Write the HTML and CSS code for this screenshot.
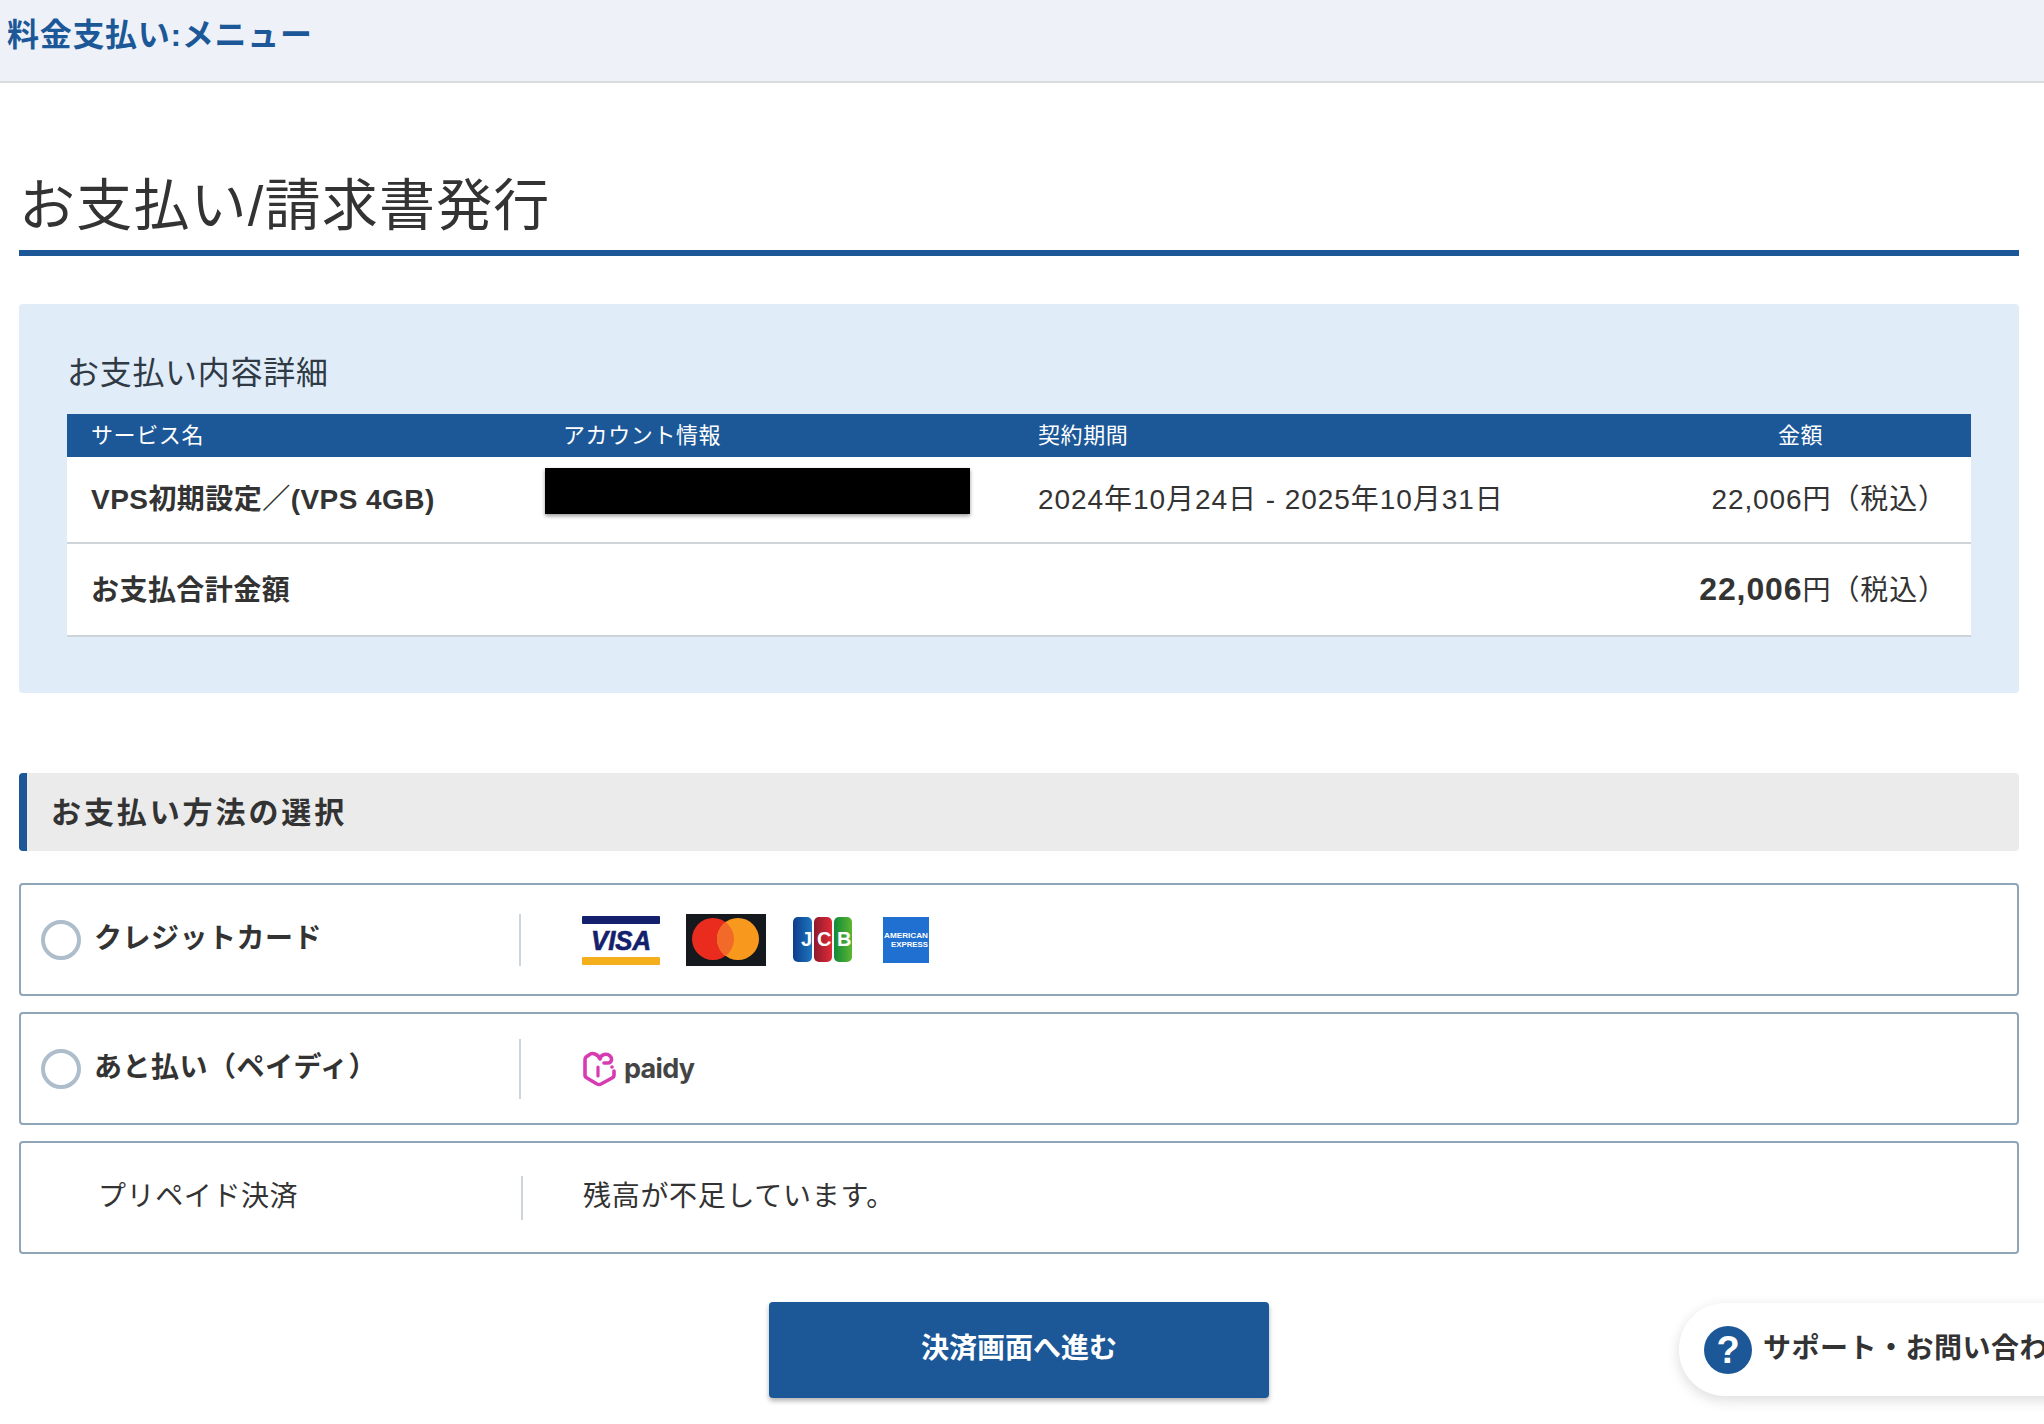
FILE: index.html
```html
<!DOCTYPE html>
<html lang="ja">
<head>
<meta charset="utf-8">
<title>お支払い/請求書発行</title>
<link rel="stylesheet" href="styles.css">
</head>
<body>
<header class="topbar"><span class="topbar-title">料金支払い:メニュー</span></header>
<main class="content">
  <h1 class="page-title">お支払い/請求書発行</h1>
  <section class="detail-panel">
    <h2 class="panel-title">お支払い内容詳細</h2>
    <table class="detail-table">
      <colgroup><col class="col-service"><col class="col-account"><col class="col-term"><col class="col-amount"></colgroup>
      <thead>
        <tr><th>サービス名</th><th>アカウント情報</th><th>契約期間</th><th class="th-amount">金額</th></tr>
      </thead>
      <tbody>
        <tr>
          <td class="strong">VPS初期設定／(VPS 4GB)</td>
          <td class="account-cell"><div class="redaction"></div></td>
          <td class="term">2024年10月24日 - 2025年10月31日</td>
          <td class="amount">22,006円（税込）</td>
        </tr>
        <tr>
          <td class="strong">お支払合計金額</td>
          <td></td>
          <td></td>
          <td class="amount"><b class="total">22,006</b>円（税込）</td>
        </tr>
      </tbody>
    </table>
  </section>

  <h2 class="section-title">お支払い方法の選択</h2>

  <div class="option">
    <span class="radio"></span>
    <span class="option-label">クレジットカード</span>
    <span class="divider"></span>
    <div class="logos">
      <svg class="logo-visa" viewBox="0 0 78 50" aria-label="VISA">
        <rect x="0" y="1" width="78" height="8" rx="1" fill="#141f6d"/>
        <rect x="0" y="42" width="78" height="8" rx="1" fill="#f5ae1c"/>
        <text x="9" y="35" class="visa-text" textLength="60" lengthAdjust="spacingAndGlyphs">VISA</text>
      </svg>
      <svg class="logo-mc" viewBox="0 0 80 52" aria-label="Mastercard">
        <rect width="80" height="52" fill="#15181c"/>
        <circle cx="27" cy="25" r="21" fill="#ea2c1f"/>
        <circle cx="52" cy="25" r="21" fill="#f8991d"/>
        <path d="M39.5 8.1a21 21 0 0 1 0 33.8a21 21 0 0 1 0-33.8z" fill="#f26a2a"/>
      </svg>
      <svg class="logo-jcb" viewBox="0 0 62 46" aria-label="JCB">
        <defs>
          <linearGradient id="jb" x1="0" x2="1" y1="0" y2="0"><stop offset="0" stop-color="#0c3d8e"/><stop offset="1" stop-color="#1d75bc"/></linearGradient>
          <linearGradient id="jr" x1="0" x2="1" y1="0" y2="0"><stop offset="0" stop-color="#8e1a2c"/><stop offset="1" stop-color="#e02a38"/></linearGradient>
          <linearGradient id="jg" x1="0" x2="1" y1="0" y2="0"><stop offset="0" stop-color="#118a3a"/><stop offset="1" stop-color="#5cb531"/></linearGradient>
        </defs>
        <rect x="1" y="0" width="19" height="45" rx="5" fill="url(#jb)"/>
        <rect x="22" y="0" width="18" height="45" rx="5" fill="url(#jr)"/>
        <rect x="42" y="0" width="18" height="45" rx="5" fill="url(#jg)"/>
        <text x="9" y="29" class="jcb-text">J</text>
        <text x="25" y="29" class="jcb-text">C</text>
        <text x="45" y="29" class="jcb-text">B</text>
      </svg>
      <svg class="logo-amex" viewBox="0 0 50 48" aria-label="American Express">
        <rect x="3" y="1" width="46" height="46" fill="#1f70d0"/>
        <text x="4" y="22" class="amex-text" textLength="44" lengthAdjust="spacingAndGlyphs">AMERICAN</text>
        <text x="11" y="31" class="amex-text" textLength="37" lengthAdjust="spacingAndGlyphs">EXPRESS</text>
      </svg>
    </div>
  </div>

  <div class="option">
    <span class="radio"></span>
    <span class="option-label">あと払い（ペイディ）</span>
    <span class="divider divider-tall"></span>
    <div class="logos">
      <svg class="logo-paidy" viewBox="0 0 124 36" aria-label="paidy">
        <path d="M17 8C15 3 9 1 6 4L3 6Q2 7 2 9V24Q2 26 4 27L14 33Q16 34 18 33L29 27Q31 26 31 24V20M17 8C18 3 24 2 27 5C30 8 28 12 25 12H21" fill="none" stroke="#d73bb2" stroke-width="3.6" stroke-linecap="round" stroke-linejoin="round"/>
        <path d="M15 16V25" fill="none" stroke="#d73bb2" stroke-width="3.2" stroke-linecap="round"/>
        <circle cx="29" cy="16" r="1.8" fill="#d73bb2"/>
        <text x="41" y="27" class="paidy-text" textLength="71" lengthAdjust="spacing">paidy</text>
      </svg>
    </div>
  </div>

  <div class="option option-plain">
    <span class="option-name">プリペイド決済</span>
    <span class="divider divider-short"></span>
    <span class="option-note">残高が不足しています。</span>
  </div>

  <button class="submit" type="button">決済画面へ進む</button>
</main>

<aside class="support">
  <span class="support-icon">?</span>
  <span class="support-text">サポート・お問い合わせ</span>
</aside>
</body>
</html>
```

FILE: styles.css
```css
* { box-sizing: border-box; }

html, body {
  margin: 0;
  height: 1424px;
  overflow: hidden;
  background: #fff;
}

body {
  position: relative;
  color: #333;
  font-family: "Liberation Sans", "Noto Sans CJK JP", sans-serif;
  font-size: 28px;
}

.topbar {
  height: 83px;
  padding: 13px 0 0 7px;
  background: #eef2f8;
  border-bottom: 2px solid #d9dcdf;
}

.topbar-title {
  color: #1c5898;
  font-size: 32px;
  font-weight: 700;
  letter-spacing: 0.7px;
  line-height: 44px;
}

.content {
  padding: 0 25px 0 19px;
}

.page-title {
  margin: 0;
  height: 173px;
  padding: 83px 0 0;
  border-bottom: 6px solid #1c5898;
  font-size: 56px;
  font-weight: 400;
  letter-spacing: 1.2px;
  line-height: 80px;
  color: #333;
}

.detail-panel {
  margin-top: 48px;
  height: 389px;
  padding: 42px 48px 0;
  background: #e1ecf9;
  border-radius: 4px;
}

.panel-title {
  margin: 0 0 22px;
  height: 46px;
  font-size: 32px;
  font-weight: 400;
  letter-spacing: 0.7px;
  line-height: 54px;
  color: #2f3a45;
}

.detail-table {
  width: 1904px;
  table-layout: fixed;
  border-collapse: collapse;
  background: #fff;
}

.col-service { width: 472px; }
.col-account { width: 475px; }
.col-term { width: 616px; }
.col-amount { width: 341px; }

.detail-table th {
  height: 43px;
  padding: 0 0 6px 24px;
  background: #1c5898;
  color: #fff;
  font-size: 22px;
  font-weight: 400;
  letter-spacing: 0.6px;
  text-align: left;
}

.detail-table .th-amount {
  padding: 0 0 6px;
  text-align: center;
}

.detail-table td {
  height: 86px;
  padding: 0 0 6px 24px;
  border-bottom: 2px solid #cdd5db;
  vertical-align: middle;
}

.detail-table tr:last-child td {
  height: 93px;
  padding-bottom: 4px;
}

.detail-table .strong {
  font-weight: 700;
  letter-spacing: 0.45px;
}

.detail-table .term {
  letter-spacing: 0.95px;
}

.detail-table .account-cell {
  padding: 0;
  vertical-align: top;
}

.redaction {
  width: 425px;
  height: 46px;
  margin: 11px 0 0 6px;
  background: #000;
  box-shadow: 0 2px 4px rgba(0, 0, 0, 0.4);
}

.detail-table .amount {
  padding-right: 24px;
  padding-left: 0;
  letter-spacing: 0.9px;
  text-align: right;
  white-space: nowrap;
}

.total {
  font-size: 32px;
}

.section-title {
  margin: 80px 0 32px;
  height: 78px;
  padding-left: 24px;
  border-left: 8px solid #1c5898;
  border-radius: 4px;
  background: #ebebeb;
  font-size: 30px;
  font-weight: 700;
  letter-spacing: 2.9px;
  line-height: 80px;
  color: #333;
}

.option {
  display: flex;
  align-items: center;
  height: 113px;
  margin-bottom: 16px;
  padding-left: 20px;
  background: #fff;
  border: 2px solid #8fa5b8;
  border-radius: 4px;
}

.radio {
  flex: none;
  width: 40px;
  height: 40px;
  border: 4px solid #aebdcb;
  border-radius: 50%;
}

.option-label {
  flex: none;
  width: 438px;
  padding-left: 13px;
  font-weight: 700;
  letter-spacing: 0.5px;
  line-height: 36px;
  margin-top: -1px;
}

.divider {
  flex: none;
  width: 2px;
  height: 52px;
  background: #cdd5db;
}

.divider-tall {
  height: 60px;
}

.divider-short {
  height: 44px;
}

.logos {
  display: flex;
  align-items: center;
  gap: 26px;
  margin-left: 61px;
}

.logo-visa { width: 78px; height: 50px; }
.logo-mc { width: 80px; height: 52px; }
.logo-jcb { width: 62px; height: 46px; }
.logo-amex { width: 50px; height: 48px; }
.logo-paidy { width: 124px; height: 36px; margin-left: 1px; }

.visa-text {
  fill: #141f6d;
  stroke: #141f6d;
  stroke-width: 0.7px;
  font-family: "Liberation Sans", sans-serif;
  font-size: 28px;
  font-style: italic;
  font-weight: 700;
}

.jcb-text {
  fill: #fff;
  font-family: "Liberation Sans", sans-serif;
  font-size: 20px;
  font-weight: 700;
}

.amex-text {
  fill: #fff;
  font-family: "Liberation Sans", sans-serif;
  font-size: 7.5px;
  font-weight: 700;
}

.paidy-text {
  fill: #444;
  font-family: "Inter", sans-serif;
  font-size: 27px;
  font-weight: 700;
}

.option-plain {
  padding-left: 77px;
}

.option-name {
  flex: none;
  width: 423px;
  letter-spacing: 0.6px;
  margin-top: -8px;
}

.option-note {
  margin-left: 60px;
  letter-spacing: 0.7px;
  margin-top: -8px;
}

.submit {
  display: block;
  width: 500px;
  height: 96px;
  margin: 48px auto 0;
  padding: 0 0 8px;
  border: 0;
  border-radius: 4px;
  background: #1c5898;
  box-shadow: 0 3px 5px rgba(0, 0, 0, 0.3);
  color: #fff;
  font-family: inherit;
  font-size: 28px;
  font-weight: 700;
}

.support {
  position: absolute;
  top: 1303px;
  left: 1679px;
  display: flex;
  align-items: center;
  gap: 11px;
  width: 480px;
  height: 93px;
  padding: 0 0 0 25px;
  background: #fff;
  border-radius: 46px 0 0 46px;
  box-shadow: 0 4px 14px rgba(0, 0, 0, 0.14);
  white-space: nowrap;
}

.support-icon {
  flex: none;
  width: 48px;
  height: 48px;
  border-radius: 50%;
  background: #1c5898;
  color: #fff;
  font-size: 38px;
  font-weight: 700;
  line-height: 48px;
  text-align: center;
}

.support-text {
  font-size: 28px;
  font-weight: 700;
  letter-spacing: 0.5px;
  margin-top: -8px;
}
```
